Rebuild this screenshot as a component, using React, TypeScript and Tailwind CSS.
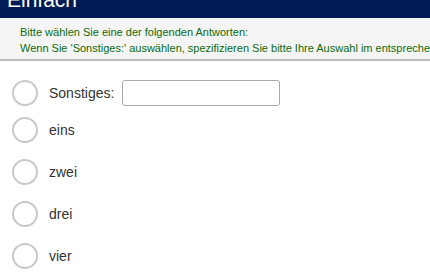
export default function App() {
  const options = ["eins", "zwei", "drei", "vier"];

  return (
    <div className="w-[430px] h-[280px] overflow-hidden bg-white font-['Liberation_Sans',Arial,sans-serif]">
      {/* Header */}
      <div className="h-[18px] bg-[#001c54] overflow-hidden relative">
        <h1 className="absolute left-[7px] top-[-13px] text-[21px] leading-[26px] text-white">Einfach</h1>
      </div>

      {/* Help text */}
      <div className="h-[43px] bg-[#f5f5f5] border-b-2 border-[#bdbdbd] pl-[20px] pt-[6px] text-[11px] leading-[16px] text-[#0b6b0b] whitespace-nowrap">
        <p>Bitte wählen Sie eine der folgenden Antworten:</p>
        <p>Wenn Sie 'Sonstiges:' auswählen, spezifizieren Sie bitte Ihre Auswahl im entsprechenden Feld.</p>
      </div>

      {/* Options */}
      <div className="pl-[12px] pt-[19px]">
        <label className="flex items-center h-[26px] mb-[11px]">
          <span className="w-[26px] h-[26px] rounded-full border-2 border-[#c8c8c8] bg-white shrink-0" />
          <span className="ml-[11px] text-[14px] text-[#333]">Sonstiges:</span>
          <span className="ml-[8px] w-[158px] h-[26px] border border-[#a9a9a9] rounded-[3px] bg-white" />
        </label>
        {options.map((o) => (
          <label key={o} className="flex items-center h-[26px] mb-[16px]">
            <span className="w-[26px] h-[26px] rounded-full border-2 border-[#c8c8c8] bg-white shrink-0" />
            <span className="ml-[11px] text-[14px] text-[#333]">{o}</span>
          </label>
        ))}
      </div>
    </div>
  );
}
